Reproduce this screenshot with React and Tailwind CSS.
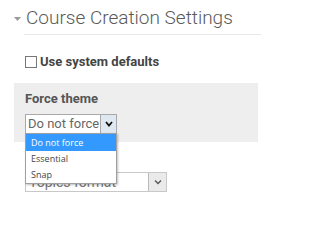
import React from "react";

export default function App() {
  return (
    <div className="relative w-[261px] h-[221px] overflow-hidden bg-white" style={{ fontFamily: "Roboto, 'Liberation Sans', sans-serif" }}>
      <div className="flex items-center pl-[14px] pt-[6px]">
        <svg width="7" height="5" viewBox="0 0 7 5" className="mr-[5px] mt-[2px]">
          <path d="M0 0 L7 0 L3.5 4 Z" fill="#9a9a9a" />
        </svg>
        <span className="text-[19px] leading-[24px] font-light text-[#5a5a5a] whitespace-nowrap">Course Creation Settings</span>
      </div>
      <div className="ml-[24px] mt-[4px] h-px bg-[#e8e8e8]" />
      <div className="flex items-center pl-[25px] mt-[17px]">
        <span className="w-[12px] h-[12px] border border-[#777] bg-white mr-[3px]" />
        <span className="text-[13px] font-bold text-[#444]">Use system defaults</span>
      </div>
      <div className="ml-[14px] mr-[3px] mt-[11px] h-[59px] bg-[#eeeeee] pl-[11px] pt-[8px]">
        <div className="text-[13px] font-bold text-[#555] leading-[16px]">Force theme</div>
        <div className="relative mt-[7px] w-[92px]">
          <div className="flex h-[20px] border border-[#a9a9a9] bg-white">
            <span className="flex-1 overflow-hidden whitespace-nowrap pl-[2px] text-[13px] leading-[18px] text-[#666]">Do not force</span>
            <span className="w-[16px] shrink-0 flex items-center justify-center bg-[#dfe7f0] border-l border-[#a9a9a9]">
              <svg width="8" height="6" viewBox="0 0 8 6"><path d="M1 1 L4 4.5 L7 1" fill="none" stroke="#111" strokeWidth="1.8" /></svg>
            </span>
          </div>
          <div className="absolute left-0 top-[19px] z-10 w-[92px] border border-[#a0a0a0] bg-white shadow-[1px_1px_2px_rgba(0,0,0,0.25)]" style={{ fontFamily: "'Open Sans', sans-serif" }}>
            <div className="h-[17px] bg-[#3399ff] pl-[5px] text-[9px] font-medium leading-[17px] text-white whitespace-nowrap">Do not force</div>
            <div className="h-[16px] pl-[5px] text-[9px] font-medium leading-[16px] text-[#444]">Essential</div>
            <div className="h-[16px] pl-[5px] text-[9px] font-medium leading-[16px] text-[#444]">Snap</div>
          </div>
        </div>
      </div>
      <div className="ml-[25px] mt-[30px] flex h-[20px] w-[142px] border border-[#c8c8c8] bg-white">
        <span className="flex-1 overflow-hidden whitespace-nowrap pl-[3px] text-[14px] leading-[18px] text-[#777]">Topics format</span>
        <span className="w-[18px] shrink-0 flex items-center justify-center bg-[#eaeaea] border-l border-[#bbb]">
          <svg width="8" height="6" viewBox="0 0 8 6"><path d="M1 1.5 L4 4.5 L7 1.5" fill="none" stroke="#555" strokeWidth="1.3" /></svg>
        </span>
      </div>
    </div>
  );
}
